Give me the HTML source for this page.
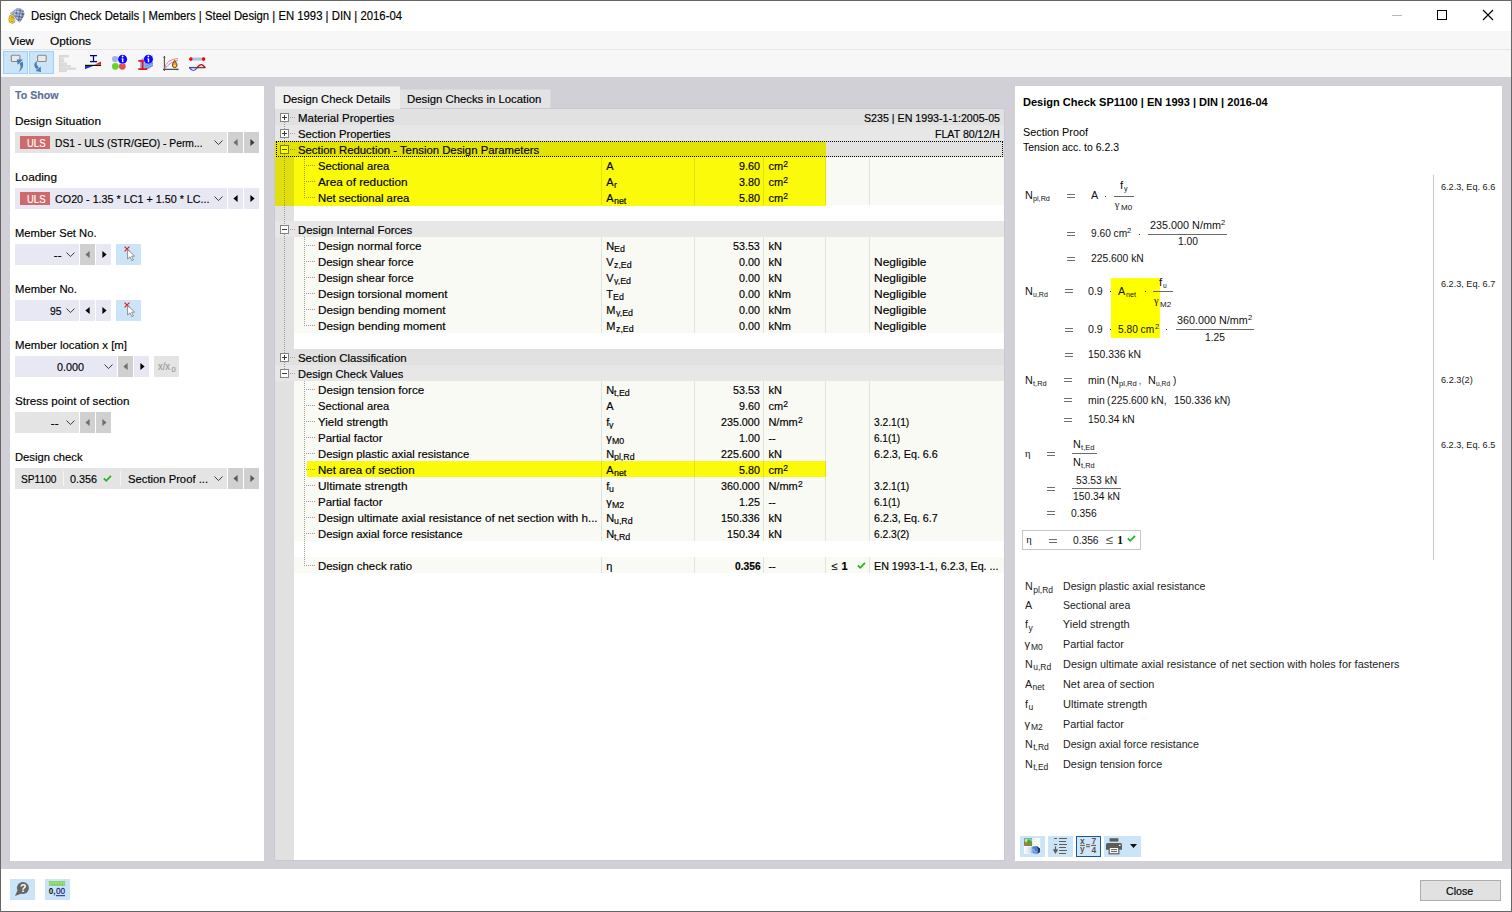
<!DOCTYPE html>
<html><head><meta charset="utf-8"><title>Design Check Details</title>
<style>
html,body{margin:0;padding:0;}
body{width:1512px;height:912px;position:relative;overflow:hidden;background:#fff;font-family:"Liberation Sans",sans-serif;font-size:11.5px;color:#000;}
div,span.t,svg{position:absolute;}
span.t{white-space:pre;transform-origin:0 0;-webkit-text-stroke:0.16px currentColor;}span.m{-webkit-text-stroke:0;}
svg{overflow:visible;}
</style></head><body>
<div style="left:0px;top:0px;width:1512px;height:31px;background:#fff;"></div>
<svg style="left:8px;top:7px;" width="17" height="17" viewBox="0 0 17 17">
<defs><linearGradient id="ig" x1="0" y1="0" x2="1" y2="1"><stop offset="0" stop-color="#aebfe4"/><stop offset="0.45" stop-color="#7083ae"/><stop offset="1" stop-color="#34405f"/></linearGradient>
<pattern id="ck" width="4.4" height="4.4" patternUnits="userSpaceOnUse" patternTransform="rotate(-36)"><rect width="2.2" height="2.2" fill="#dbe6fb" opacity="0.75"/><rect x="2.2" y="2.2" width="2.2" height="2.2" fill="#dbe6fb" opacity="0.55"/><rect x="2.2" width="2.2" height="2.2" fill="#2c3858" opacity="0.35"/></pattern></defs>
<path d="M1.8 6.6 L9 1.1 Q13.2 0.2 15.5 3.6 Q17.2 6.6 15.6 9.6 L11.7 15.6 L8 12 L6 8.4 Z" fill="url(#ig)"/>
<path d="M1.8 6.6 L9 1.1 Q13.2 0.2 15.5 3.6 Q17.2 6.6 15.6 9.6 L11.7 15.6 L8 12 L6 8.4 Z" fill="url(#ck)"/>
<text x="0.7" y="15.7" font-family="Liberation Sans" font-weight="700" font-size="11.5" fill="#f3cc1c" stroke="#806a14" stroke-width="0.9" paint-order="stroke">6</text>
</svg>
<span class="t " style="left:30.50px;top:9px;font-size:12px;line-height:14px;transform:scaleX(0.9438);">Design Check Details | Members | Steel Design | EN 1993 | DIN | 2016-04</span>
<div style="left:1392px;top:15px;width:10px;height:1px;background:#b8b8b8;"></div>
<div style="left:1437px;top:10px;width:10px;height:10px;border:1px solid #000;box-sizing:border-box;"></div>
<svg style="left:1483px;top:10px;" width="10" height="10" viewBox="0 0 10 10"><path d="M0 0 L10 10 M10 0 L0 10" stroke="#000" stroke-width="1.1" fill="none"/></svg>
<div style="left:1px;top:31px;width:1510px;height:18px;background:#f7f7f7;"></div>
<div style="left:1px;top:49px;width:1510px;height:1px;background:#e6e6e6;"></div>
<div style="left:1px;top:50px;width:1510px;height:27px;background:#f7f7f7;"></div>
<span class="t " style="left:9.00px;top:35px;font-size:11.5px;line-height:12px;transform:scaleX(1.0114);">View</span>
<span class="t " style="left:50.30px;top:35px;font-size:11.5px;line-height:12px;transform:scaleX(1.0345);">Options</span>
<div style="left:3px;top:51px;width:25px;height:23px;background:#cce4f7;border:1px solid #99d1ff;box-sizing:border-box;"></div>
<div style="left:29px;top:51px;width:25px;height:23px;background:#cce4f7;border:1px solid #99d1ff;box-sizing:border-box;"></div>
<svg style="left:7px;top:54px;" width="18" height="19" viewBox="0 0 18 19">
<rect x="4.3" y="1.3" width="8.6" height="6.2" rx="1" fill="#e9e9e9" stroke="#8a8a8a" stroke-width="1.1"/>
<path d="M11.4 17.9 Q18.4 13.6 15.4 7.6 L12.4 9.4 Q15 13.4 11.4 17.9 Z" fill="#4a7fb6"/>
<path d="M9.7 5.4 L16 5.6 L10.7 10.8 Z" fill="#4a7fb6"/>
</svg>
<svg style="left:33px;top:54px;" width="18" height="19" viewBox="0 0 18 19">
<rect x="4.6" y="1.3" width="8.6" height="6.2" rx="1" fill="#e9e9e9" stroke="#8a8a8a" stroke-width="1.1"/>
<path d="M4.6 6.6 Q-1.6 10.6 3.6 15.6 L5.8 13.4 Q2.2 10.6 4.6 6.6 Z" fill="#4a7fb6"/>
<path d="M2.5 17 L8 17.9 L7.7 12.4 Z" fill="#4a7fb6"/>
</svg>
<svg style="left:59px;top:55px;" width="18" height="18" viewBox="0 0 18 18"><g fill="#d9d9d9">
<rect x="0" y="0" width="10" height="2.4"/><rect x="0" y="2.6" width="4.6" height="2.3"/><rect x="0" y="5.1" width="5.2" height="2.3"/>
<rect x="0" y="7.6" width="8" height="2.3"/><rect x="0" y="10.1" width="12" height="2.2"/><rect x="0" y="12.5" width="16.8" height="2.4"/><rect x="0" y="15.1" width="8" height="2"/><rect x="0" y="0" width="1" height="17.1" fill="#d2d2d2"/></g></svg>
<svg style="left:85px;top:54px;" width="17" height="17" viewBox="0 0 17 17">
<path d="M5 1.6 H12 M5 7.6 H12 M8.5 1.6 V7.6" stroke="#00008b" stroke-width="1.3" fill="none"/>
<path d="M0 11.4 H16" stroke="#111" stroke-width="1.2"/>
<path d="M0 12 L8 12 L0 15.3 Z" fill="#1c3fae"/>
<path d="M16 7.5 L16 10.8 L9.6 10.8 Z" fill="#d8280a"/>
</svg>
<svg style="left:111px;top:54px;" width="17" height="17" viewBox="0 0 17 17">
<circle cx="4.1" cy="5.1" r="3.1" fill="#9fb3ea"/>
<circle cx="4.3" cy="12.3" r="3.4" fill="#66d424"/>
<circle cx="11.3" cy="12.3" r="3.4" fill="#e05252"/>
<circle cx="11.6" cy="5.3" r="4.9" fill="#fff"/>
<circle cx="11.6" cy="5.3" r="4.5" fill="#0a0aff"/>
<rect x="11" y="4.5" width="1.4" height="3.7" fill="#fff"/><rect x="10.4" y="4.5" width="1" height="0.8" fill="#fff"/><circle cx="11.6" cy="2.5" r="0.9" fill="#fff"/>
</svg>
<svg style="left:137px;top:54px;" width="17" height="17" viewBox="0 0 17 17">
<path d="M3 6 L10 1.5 L16 1.5 L16 12 L10 16 L3 16 Z" fill="#8fb2ea"/>
<path d="M8 10 L16 6.5 M8 12.5 L16 9 M8 15 L16 11.4" stroke="#5f86cf" stroke-width="0.9"/>
<path d="M1.3 6.8 H10 M1.3 15.2 H10 M5.6 6.8 V15.2" stroke="#e8101c" stroke-width="1.7" fill="none"/>
<circle cx="11.4" cy="5.3" r="4.9" fill="#fff" opacity="0.6"/>
<circle cx="11.4" cy="5.3" r="4.5" fill="#0a0aff"/>
<rect x="10.8" y="4.5" width="1.4" height="3.7" fill="#fff"/><rect x="10.2" y="4.5" width="1" height="0.8" fill="#fff"/><circle cx="11.4" cy="2.5" r="0.9" fill="#fff"/>
</svg>
<svg style="left:163px;top:54px;" width="17" height="18" viewBox="0 0 17 18">
<path d="M1.4 2 V17 M0 15.4 H15.5" stroke="#505050" stroke-width="1.1" fill="none"/>
<path d="M1.4 2 l-1.2 2 h2.4 z M15.6 15.4 l-2 -1.2 v2.4 z" fill="#505050"/>
<path d="M1.6 15 Q3 5 15 4.6" stroke="#ff6a6a" stroke-width="0.9" fill="none"/>
<path d="M1.6 15 Q8 7 15 6.6" stroke="#8a8aff" stroke-width="0.9" fill="none"/>
<path d="M11.7 6.4 Q14.6 10 14 12 Q13.3 13.7 11.7 13.7 Q10 13.7 9.4 12 Q8.8 10 11.7 6.4 Z" fill="#ff8a14" stroke="#5a2a10" stroke-width="0.8"/>
<circle cx="11.7" cy="11.6" r="1.2" fill="#ffe27a"/>
</svg>
<svg style="left:189px;top:54px;" width="17" height="18" viewBox="0 0 17 18">
<rect x="1.4" y="3.6" width="13.4" height="3" fill="#a9c4e2"/>
<circle cx="1.8" cy="5.1" r="1.8" fill="#f00"/><circle cx="14.6" cy="5.1" r="1.8" fill="#f00"/>
<path d="M0 13.6 H16.4" stroke="#555" stroke-width="1.4"/>
<path d="M0.5 13.6 Q4.3 19.4 8.2 13.6" stroke="#3c3cff" stroke-width="1.1" fill="none"/>
<path d="M8.2 13.6 Q12.2 7.6 16.2 13.6" stroke="#c00000" stroke-width="1.3" fill="none"/>
</svg>
<div style="left:1px;top:77px;width:1510px;height:792px;background:#d1d0d6;"></div>
<div style="left:10px;top:86px;width:254px;height:775px;background:#fff;"></div>
<span class="t " style="left:15.00px;top:89px;font-size:11.5px;line-height:12px;font-weight:700;color:#5b6f98;transform:scaleX(0.9244);">To Show</span>
<span class="t " style="left:15.20px;top:115px;font-size:11.5px;line-height:12px;transform:scaleX(1.0269);">Design Situation</span>
<span class="t " style="left:15.20px;top:171px;font-size:11.5px;line-height:12px;transform:scaleX(1.0261);">Loading</span>
<span class="t " style="left:15.20px;top:227px;font-size:11.5px;line-height:12px;transform:scaleX(0.9734);">Member Set No.</span>
<span class="t " style="left:15.20px;top:283px;font-size:11.5px;line-height:12px;transform:scaleX(0.9800);">Member No.</span>
<span class="t " style="left:15.20px;top:339px;font-size:11.5px;line-height:12px;transform:scaleX(0.9901);">Member location x [m]</span>
<span class="t " style="left:15.20px;top:395px;font-size:11.5px;line-height:12px;transform:scaleX(1.0120);">Stress point of section</span>
<span class="t " style="left:15.20px;top:451px;font-size:11.5px;line-height:12px;transform:scaleX(0.9778);">Design check</span>
<div style="left:15px;top:132px;width:212px;height:21px;background:#e4e4e4;"></div>
<div style="left:20px;top:136px;width:30px;height:13px;background:#cf6a6c;"></div>
<span class="t " style="left:26.50px;top:137px;font-size:11.5px;line-height:12px;color:#fff;transform:scaleX(0.8270);">ULS</span>
<span class="t " style="left:55.00px;top:137px;font-size:11.5px;line-height:12px;transform:scaleX(0.8947);">DS1 - ULS (STR/GEO) - Perm...</span>
<svg style="left:213.5px;top:140px;" width="9" height="6" viewBox="0 0 9 6"><path d="M0.5 0.5 L4.5 4.6 L8.5 0.5" stroke="#3c3c3c" stroke-width="1" fill="none"/></svg>
<div style="left:228px;top:132px;width:15px;height:21px;background:#d0d0d0;"></div>
<div style="left:244px;top:132px;width:15px;height:21px;background:#d0d0d0;"></div>
<svg style="left:232.5px;top:139px;" width="5" height="7" viewBox="0 0 5 7"><path d="M4.6 0 L0.4 3.5 L4.6 7 Z" fill="#6e6e6e"/></svg>
<svg style="left:249.5px;top:139px;" width="5" height="7" viewBox="0 0 5 7"><path d="M0.4 0 L4.6 3.5 L0.4 7 Z" fill="#3c3c3c"/></svg>
<div style="left:15px;top:188px;width:212px;height:21px;background:#e8e8f4;"></div>
<div style="left:20px;top:192px;width:30px;height:13px;background:#cf6a6c;"></div>
<span class="t " style="left:26.50px;top:193px;font-size:11.5px;line-height:12px;color:#fff;transform:scaleX(0.8270);">ULS</span>
<span class="t " style="left:55.00px;top:193px;font-size:11.5px;line-height:12px;transform:scaleX(0.9350);">CO20 - 1.35 * LC1 + 1.50 * LC...</span>
<svg style="left:213.5px;top:196px;" width="9" height="6" viewBox="0 0 9 6"><path d="M0.5 0.5 L4.5 4.6 L8.5 0.5" stroke="#3c3c3c" stroke-width="1" fill="none"/></svg>
<div style="left:228px;top:188px;width:15px;height:21px;background:#e8e8f4;"></div>
<div style="left:244px;top:188px;width:15px;height:21px;background:#e8e8f4;"></div>
<svg style="left:232.5px;top:195px;" width="5" height="7" viewBox="0 0 5 7"><path d="M4.6 0 L0.4 3.5 L4.6 7 Z" fill="#000"/></svg>
<svg style="left:249.5px;top:195px;" width="5" height="7" viewBox="0 0 5 7"><path d="M0.4 0 L4.6 3.5 L0.4 7 Z" fill="#000"/></svg>
<div style="left:15px;top:244px;width:64px;height:21px;background:#e8e8f4;"></div>
<span class="t " style="left:53.84px;top:249px;font-size:11.5px;line-height:12px;">--</span>
<svg style="left:65.5px;top:252px;" width="9" height="6" viewBox="0 0 9 6"><path d="M0.5 0.5 L4.5 4.6 L8.5 0.5" stroke="#3c3c3c" stroke-width="1" fill="none"/></svg>
<div style="left:80px;top:244px;width:15px;height:21px;background:#d0d0d0;"></div>
<div style="left:96px;top:244px;width:15px;height:21px;background:#e8e8f4;"></div>
<svg style="left:84.5px;top:251px;" width="5" height="7" viewBox="0 0 5 7"><path d="M4.6 0 L0.4 3.5 L4.6 7 Z" fill="#6e6e6e"/></svg>
<svg style="left:101.5px;top:251px;" width="5" height="7" viewBox="0 0 5 7"><path d="M0.4 0 L4.6 3.5 L0.4 7 Z" fill="#000"/></svg>
<div style="left:116px;top:244px;width:25px;height:21px;background:#cce4f7;"></div>
<svg style="left:123.5px;top:246px;" width="12" height="16" viewBox="0 0 12 16"><path d="M0.6 0.6 L5.4 5.4 M5.4 0.6 L0.6 5.4" stroke="#e8101c" stroke-width="1.1"/>
<path d="M3.6 3.6 L3.6 13 L6 10.8 L7.8 14.6 L9.4 13.8 L7.6 10.2 L10.6 10 Z" fill="#fff" stroke="#777" stroke-width="0.8"/></svg>
<div style="left:15px;top:300px;width:64px;height:21px;background:#e8e8f4;"></div>
<span class="t " style="left:49.80px;top:305px;font-size:11.5px;line-height:12px;transform:scaleX(0.8990);">95</span>
<svg style="left:65.5px;top:308px;" width="9" height="6" viewBox="0 0 9 6"><path d="M0.5 0.5 L4.5 4.6 L8.5 0.5" stroke="#3c3c3c" stroke-width="1" fill="none"/></svg>
<div style="left:80px;top:300px;width:15px;height:21px;background:#e8e8f4;"></div>
<div style="left:96px;top:300px;width:15px;height:21px;background:#e8e8f4;"></div>
<svg style="left:84.5px;top:307px;" width="5" height="7" viewBox="0 0 5 7"><path d="M4.6 0 L0.4 3.5 L4.6 7 Z" fill="#000"/></svg>
<svg style="left:101.5px;top:307px;" width="5" height="7" viewBox="0 0 5 7"><path d="M0.4 0 L4.6 3.5 L0.4 7 Z" fill="#000"/></svg>
<div style="left:116px;top:300px;width:25px;height:21px;background:#cce4f7;"></div>
<svg style="left:123.5px;top:302px;" width="12" height="16" viewBox="0 0 12 16"><path d="M0.6 0.6 L5.4 5.4 M5.4 0.6 L0.6 5.4" stroke="#e8101c" stroke-width="1.1"/>
<path d="M3.6 3.6 L3.6 13 L6 10.8 L7.8 14.6 L9.4 13.8 L7.6 10.2 L10.6 10 Z" fill="#fff" stroke="#777" stroke-width="0.8"/></svg>
<div style="left:15px;top:356px;width:102px;height:21px;background:#e8e8f4;"></div>
<span class="t " style="left:57.00px;top:361px;font-size:11.5px;line-height:12px;transform:scaleX(0.9382);">0.000</span>
<svg style="left:103.8px;top:364px;" width="9" height="6" viewBox="0 0 9 6"><path d="M0.5 0.5 L4.5 4.6 L8.5 0.5" stroke="#3c3c3c" stroke-width="1" fill="none"/></svg>
<div style="left:118px;top:356px;width:15px;height:21px;background:#d0d0d0;"></div>
<div style="left:134px;top:356px;width:15px;height:21px;background:#e8e8f4;"></div>
<svg style="left:122.5px;top:363px;" width="5" height="7" viewBox="0 0 5 7"><path d="M4.6 0 L0.4 3.5 L4.6 7 Z" fill="#6e6e6e"/></svg>
<svg style="left:139.5px;top:363px;" width="5" height="7" viewBox="0 0 5 7"><path d="M0.4 0 L4.6 3.5 L0.4 7 Z" fill="#000"/></svg>
<div style="left:154px;top:356px;width:25px;height:21px;background:#e4e4e4;"></div>
<span class="t " style="left:158.00px;top:361px;font-size:10px;line-height:11px;color:#9a9a9a;transform:scaleX(0.9391);">x/x</span>
<span class="t " style="left:171.50px;top:365px;font-size:7.5px;line-height:9px;color:#9a9a9a;">0</span>
<div style="left:15px;top:412px;width:64px;height:21px;background:#e4e4e4;"></div>
<span class="t " style="left:50.84px;top:417px;font-size:11.5px;line-height:12px;">--</span>
<svg style="left:65.5px;top:420px;" width="9" height="6" viewBox="0 0 9 6"><path d="M0.5 0.5 L4.5 4.6 L8.5 0.5" stroke="#3c3c3c" stroke-width="1" fill="none"/></svg>
<div style="left:80px;top:412px;width:15px;height:21px;background:#d0d0d0;"></div>
<div style="left:96px;top:412px;width:15px;height:21px;background:#d0d0d0;"></div>
<svg style="left:84.5px;top:419px;" width="5" height="7" viewBox="0 0 5 7"><path d="M4.6 0 L0.4 3.5 L4.6 7 Z" fill="#6e6e6e"/></svg>
<svg style="left:101.5px;top:419px;" width="5" height="7" viewBox="0 0 5 7"><path d="M0.4 0 L4.6 3.5 L0.4 7 Z" fill="#6e6e6e"/></svg>
<div style="left:15px;top:468px;width:212px;height:21px;background:#e4e4e4;"></div>
<span class="t " style="left:20.50px;top:473px;font-size:11.5px;line-height:12px;transform:scaleX(0.8859);">SP1100</span>
<div style="left:63px;top:471px;width:1px;height:15px;background:#f4f4f4;"></div>
<span class="t " style="left:70.20px;top:473px;font-size:11.5px;line-height:12px;transform:scaleX(0.9382);">0.356</span>
<svg style="left:102.5px;top:475px;" width="9" height="7" viewBox="0 0 9 7"><path d="M0.8 3.4 L3.2 5.8 L8 0.8" stroke="#22b422" stroke-width="1.7" fill="none"/></svg>
<div style="left:120px;top:471px;width:1px;height:15px;background:#f4f4f4;"></div>
<span class="t " style="left:127.50px;top:473px;font-size:11.5px;line-height:12px;transform:scaleX(0.9778);">Section Proof ...</span>
<svg style="left:213.8px;top:476px;" width="9" height="6" viewBox="0 0 9 6"><path d="M0.5 0.5 L4.5 4.6 L8.5 0.5" stroke="#3c3c3c" stroke-width="1" fill="none"/></svg>
<div style="left:228px;top:468px;width:15px;height:21px;background:#d0d0d0;"></div>
<div style="left:244px;top:468px;width:15px;height:21px;background:#d0d0d0;"></div>
<svg style="left:232.5px;top:475px;" width="5" height="7" viewBox="0 0 5 7"><path d="M4.6 0 L0.4 3.5 L4.6 7 Z" fill="#5a5a5a"/></svg>
<svg style="left:249.5px;top:475px;" width="5" height="7" viewBox="0 0 5 7"><path d="M0.4 0 L4.6 3.5 L0.4 7 Z" fill="#5a5a5a"/></svg>
<div style="left:275px;top:86px;width:124.5px;height:1px;background:#e2e2e7;"></div>
<div style="left:275px;top:87px;width:124.5px;height:23px;background:#f0f0f0;"></div>
<div style="left:399.5px;top:89px;width:151px;height:20px;background:#e3e3e6;border:1px solid #d8d8df;box-sizing:border-box;border-left:none;"></div>
<span class="t " style="left:283.00px;top:93px;font-size:11px;line-height:12px;transform:scaleX(1.0213);">Design Check Details</span>
<span class="t " style="left:407.10px;top:93px;font-size:11px;line-height:12px;transform:scaleX(1.0312);">Design Checks in Location</span>
<div style="left:274px;top:108px;width:731px;height:753px;background:#c9c9d3;"></div>
<div style="left:275px;top:109px;width:729px;height:751px;background:#fff;"></div>
<div style="left:275px;top:109px;width:19px;height:751px;background:#e1e1e1;"></div>
<div style="left:275px;top:108px;width:124.5px;height:1px;background:#f0f0f0;"></div>
<div style="left:275px;top:109px;width:729px;height:16px;background:#e1e1e1;"></div>
<svg style="left:280px;top:113px;" width="9" height="9" viewBox="0 0 9 9"><rect x="0.5" y="0.5" width="8" height="8" fill="#fff" stroke="#848484"/><path d="M2 4.5 H7" stroke="#3a3a3a" stroke-width="1"/><path d="M4.5 2 V7" stroke="#3a3a3a" stroke-width="1"/></svg>
<div style="left:290px;top:117px;width:5px;height:1px;background:repeating-linear-gradient(to right,#a8a8a8 0 1px,transparent 1px 2px);"></div>
<span class="t " style="left:298.40px;top:112px;font-size:11px;line-height:12px;transform:scaleX(1.0426);">Material Properties</span>
<span class="t " style="left:863.60px;top:112px;font-size:11px;line-height:12px;transform:scaleX(0.9683);">S235 | EN 1993-1-1:2005-05</span>
<div style="left:275px;top:125px;width:729px;height:16px;background:#e7e7e7;"></div>
<svg style="left:280px;top:129px;" width="9" height="9" viewBox="0 0 9 9"><rect x="0.5" y="0.5" width="8" height="8" fill="#fff" stroke="#848484"/><path d="M2 4.5 H7" stroke="#3a3a3a" stroke-width="1"/><path d="M4.5 2 V7" stroke="#3a3a3a" stroke-width="1"/></svg>
<div style="left:290px;top:133px;width:5px;height:1px;background:repeating-linear-gradient(to right,#a8a8a8 0 1px,transparent 1px 2px);"></div>
<span class="t " style="left:298.40px;top:128px;font-size:11px;line-height:12px;transform:scaleX(1.0291);">Section Properties</span>
<span class="t " style="left:934.60px;top:128px;font-size:11px;line-height:12px;transform:scaleX(0.9635);">FLAT 80/12/H</span>
<div style="left:275px;top:141px;width:729px;height:16px;background:#e1e1e1;"></div>
<div style="left:275px;top:141px;width:551px;height:16px;background:#e2e206;"></div>
<svg style="left:280px;top:145px;" width="9" height="9" viewBox="0 0 9 9"><rect x="0.5" y="0.5" width="8" height="8" fill="#ffff00" stroke="#77770a"/><path d="M2 4.5 H7" stroke="#55550a" stroke-width="1"/></svg>
<div style="left:290px;top:149px;width:5px;height:1px;background:repeating-linear-gradient(to right,#a0a00a 0 1px,transparent 1px 2px);"></div>
<span class="t " style="left:298.40px;top:144px;font-size:11px;line-height:12px;transform:scaleX(1.0311);">Section Reduction - Tension Design Parameters</span>
<div style="left:294px;top:157px;width:710px;height:16px;background:#fafaf5;"></div>
<div style="left:275px;top:157px;width:19px;height:16px;background:#e0e010;"></div>
<div style="left:294px;top:157px;width:532px;height:16px;background:#fafa0a;"></div>
<div style="left:601px;top:157px;width:1px;height:16px;background:#e2e208;"></div>
<div style="left:694px;top:157px;width:1px;height:16px;background:#e2e208;"></div>
<div style="left:763px;top:157px;width:1px;height:16px;background:#e2e208;"></div>
<div style="left:825px;top:157px;width:1px;height:16px;background:#e2e208;"></div>
<div style="left:869px;top:157px;width:1px;height:16px;background:#e3e3de;"></div>
<div style="left:306px;top:165px;width:10px;height:1px;background:repeating-linear-gradient(to right,#a0a00a 0 1px,transparent 1px 2px);"></div>
<span class="t " style="left:318.40px;top:160px;font-size:11px;line-height:12px;transform:scaleX(1.0132);">Sectional area</span>
<span class="t " style="left:606.20px;top:160px;font-size:11px;line-height:12px;">A</span>
<span class="t " style="left:739.33px;top:160px;font-size:11px;line-height:12px;transform:scaleX(0.9750);">9.60</span>
<span class="t " style="left:768.40px;top:160px;font-size:11px;line-height:12px;">cm</span>
<span class="t " style="left:783.36px;top:159px;font-size:8.5px;line-height:10px;">2</span>
<div style="left:294px;top:173px;width:710px;height:16px;background:#fafaf5;"></div>
<div style="left:275px;top:173px;width:19px;height:16px;background:#e0e010;"></div>
<div style="left:294px;top:173px;width:532px;height:16px;background:#fafa0a;"></div>
<div style="left:601px;top:173px;width:1px;height:16px;background:#e2e208;"></div>
<div style="left:694px;top:173px;width:1px;height:16px;background:#e2e208;"></div>
<div style="left:763px;top:173px;width:1px;height:16px;background:#e2e208;"></div>
<div style="left:825px;top:173px;width:1px;height:16px;background:#e2e208;"></div>
<div style="left:869px;top:173px;width:1px;height:16px;background:#e3e3de;"></div>
<div style="left:306px;top:181px;width:10px;height:1px;background:repeating-linear-gradient(to right,#a0a00a 0 1px,transparent 1px 2px);"></div>
<span class="t " style="left:318.40px;top:176px;font-size:11px;line-height:12px;transform:scaleX(1.0684);">Area of reduction</span>
<span class="t " style="left:606.20px;top:176px;font-size:11px;line-height:12px;">A</span>
<span class="t " style="left:613.74px;top:180px;font-size:9px;line-height:10px;transform:scaleX(0.9800);">r</span>
<span class="t " style="left:739.33px;top:176px;font-size:11px;line-height:12px;transform:scaleX(0.9750);">3.80</span>
<span class="t " style="left:768.40px;top:176px;font-size:11px;line-height:12px;">cm</span>
<span class="t " style="left:783.36px;top:175px;font-size:8.5px;line-height:10px;">2</span>
<div style="left:294px;top:189px;width:710px;height:16px;background:#fafaf5;"></div>
<div style="left:275px;top:189px;width:19px;height:17px;background:#e0e010;"></div>
<div style="left:294px;top:189px;width:532px;height:17px;background:#fafa0a;"></div>
<div style="left:601px;top:189px;width:1px;height:16px;background:#e2e208;"></div>
<div style="left:694px;top:189px;width:1px;height:16px;background:#e2e208;"></div>
<div style="left:763px;top:189px;width:1px;height:16px;background:#e2e208;"></div>
<div style="left:825px;top:189px;width:1px;height:16px;background:#e2e208;"></div>
<div style="left:869px;top:189px;width:1px;height:16px;background:#e3e3de;"></div>
<div style="left:306px;top:197px;width:10px;height:1px;background:repeating-linear-gradient(to right,#a0a00a 0 1px,transparent 1px 2px);"></div>
<span class="t " style="left:318.40px;top:192px;font-size:11px;line-height:12px;transform:scaleX(1.0292);">Net sectional area</span>
<span class="t " style="left:606.20px;top:192px;font-size:11px;line-height:12px;">A</span>
<span class="t " style="left:613.74px;top:196px;font-size:9px;line-height:10px;transform:scaleX(0.9800);">net</span>
<span class="t " style="left:739.33px;top:192px;font-size:11px;line-height:12px;transform:scaleX(0.9750);">5.80</span>
<span class="t " style="left:768.40px;top:192px;font-size:11px;line-height:12px;">cm</span>
<span class="t " style="left:783.36px;top:191px;font-size:8.5px;line-height:10px;">2</span>
<div style="left:275px;top:221px;width:729px;height:16px;background:#e7e7e7;"></div>
<svg style="left:280px;top:225px;" width="9" height="9" viewBox="0 0 9 9"><rect x="0.5" y="0.5" width="8" height="8" fill="#fff" stroke="#848484"/><path d="M2 4.5 H7" stroke="#3a3a3a" stroke-width="1"/></svg>
<div style="left:290px;top:229px;width:5px;height:1px;background:repeating-linear-gradient(to right,#a8a8a8 0 1px,transparent 1px 2px);"></div>
<span class="t " style="left:298.40px;top:224px;font-size:11px;line-height:12px;transform:scaleX(1.0324);">Design Internal Forces</span>
<div style="left:294px;top:237px;width:710px;height:16px;background:#fafaf5;"></div>
<div style="left:601px;top:237px;width:1px;height:16px;background:#e3e3de;"></div>
<div style="left:694px;top:237px;width:1px;height:16px;background:#e3e3de;"></div>
<div style="left:763px;top:237px;width:1px;height:16px;background:#e3e3de;"></div>
<div style="left:825px;top:237px;width:1px;height:16px;background:#e3e3de;"></div>
<div style="left:869px;top:237px;width:1px;height:16px;background:#e3e3de;"></div>
<div style="left:306px;top:245px;width:10px;height:1px;background:repeating-linear-gradient(to right,#9c9c9c 0 1px,transparent 1px 2px);"></div>
<span class="t " style="left:318.40px;top:240px;font-size:11px;line-height:12px;transform:scaleX(1.0515);">Design normal force</span>
<span class="t " style="left:606.20px;top:240px;font-size:11px;line-height:12px;">N</span>
<span class="t " style="left:614.34px;top:244px;font-size:9px;line-height:10px;transform:scaleX(0.9800);">Ed</span>
<span class="t " style="left:733.36px;top:240px;font-size:11px;line-height:12px;transform:scaleX(0.9750);">53.53</span>
<span class="t " style="left:768.40px;top:240px;font-size:11px;line-height:12px;">kN</span>
<div style="left:294px;top:253px;width:710px;height:16px;background:#fafaf5;"></div>
<div style="left:601px;top:253px;width:1px;height:16px;background:#e3e3de;"></div>
<div style="left:694px;top:253px;width:1px;height:16px;background:#e3e3de;"></div>
<div style="left:763px;top:253px;width:1px;height:16px;background:#e3e3de;"></div>
<div style="left:825px;top:253px;width:1px;height:16px;background:#e3e3de;"></div>
<div style="left:869px;top:253px;width:1px;height:16px;background:#e3e3de;"></div>
<div style="left:306px;top:261px;width:10px;height:1px;background:repeating-linear-gradient(to right,#9c9c9c 0 1px,transparent 1px 2px);"></div>
<span class="t " style="left:318.40px;top:256px;font-size:11px;line-height:12px;transform:scaleX(1.0344);">Design shear force</span>
<span class="t " style="left:606.20px;top:256px;font-size:11px;line-height:12px;">V</span>
<span class="t " style="left:613.74px;top:260px;font-size:9px;line-height:10px;transform:scaleX(0.9800);">z,Ed</span>
<span class="t " style="left:739.33px;top:256px;font-size:11px;line-height:12px;transform:scaleX(0.9750);">0.00</span>
<span class="t " style="left:768.40px;top:256px;font-size:11px;line-height:12px;">kN</span>
<span class="t " style="left:874.20px;top:256px;font-size:11px;line-height:12px;transform:scaleX(1.0868);">Negligible</span>
<div style="left:294px;top:269px;width:710px;height:16px;background:#fafaf5;"></div>
<div style="left:601px;top:269px;width:1px;height:16px;background:#e3e3de;"></div>
<div style="left:694px;top:269px;width:1px;height:16px;background:#e3e3de;"></div>
<div style="left:763px;top:269px;width:1px;height:16px;background:#e3e3de;"></div>
<div style="left:825px;top:269px;width:1px;height:16px;background:#e3e3de;"></div>
<div style="left:869px;top:269px;width:1px;height:16px;background:#e3e3de;"></div>
<div style="left:306px;top:277px;width:10px;height:1px;background:repeating-linear-gradient(to right,#9c9c9c 0 1px,transparent 1px 2px);"></div>
<span class="t " style="left:318.40px;top:272px;font-size:11px;line-height:12px;transform:scaleX(1.0344);">Design shear force</span>
<span class="t " style="left:606.20px;top:272px;font-size:11px;line-height:12px;">V</span>
<span class="t " style="left:613.74px;top:276px;font-size:9px;line-height:10px;transform:scaleX(0.9800);">y,Ed</span>
<span class="t " style="left:739.33px;top:272px;font-size:11px;line-height:12px;transform:scaleX(0.9750);">0.00</span>
<span class="t " style="left:768.40px;top:272px;font-size:11px;line-height:12px;">kN</span>
<span class="t " style="left:874.20px;top:272px;font-size:11px;line-height:12px;transform:scaleX(1.0868);">Negligible</span>
<div style="left:294px;top:285px;width:710px;height:16px;background:#fafaf5;"></div>
<div style="left:601px;top:285px;width:1px;height:16px;background:#e3e3de;"></div>
<div style="left:694px;top:285px;width:1px;height:16px;background:#e3e3de;"></div>
<div style="left:763px;top:285px;width:1px;height:16px;background:#e3e3de;"></div>
<div style="left:825px;top:285px;width:1px;height:16px;background:#e3e3de;"></div>
<div style="left:869px;top:285px;width:1px;height:16px;background:#e3e3de;"></div>
<div style="left:306px;top:293px;width:10px;height:1px;background:repeating-linear-gradient(to right,#9c9c9c 0 1px,transparent 1px 2px);"></div>
<span class="t " style="left:318.40px;top:288px;font-size:11px;line-height:12px;transform:scaleX(1.0644);">Design torsional moment</span>
<span class="t " style="left:606.20px;top:288px;font-size:11px;line-height:12px;">T</span>
<span class="t " style="left:613.12px;top:292px;font-size:9px;line-height:10px;transform:scaleX(0.9800);">Ed</span>
<span class="t " style="left:739.33px;top:288px;font-size:11px;line-height:12px;transform:scaleX(0.9750);">0.00</span>
<span class="t " style="left:768.40px;top:288px;font-size:11px;line-height:12px;">kNm</span>
<span class="t " style="left:874.20px;top:288px;font-size:11px;line-height:12px;transform:scaleX(1.0868);">Negligible</span>
<div style="left:294px;top:301px;width:710px;height:16px;background:#fafaf5;"></div>
<div style="left:601px;top:301px;width:1px;height:16px;background:#e3e3de;"></div>
<div style="left:694px;top:301px;width:1px;height:16px;background:#e3e3de;"></div>
<div style="left:763px;top:301px;width:1px;height:16px;background:#e3e3de;"></div>
<div style="left:825px;top:301px;width:1px;height:16px;background:#e3e3de;"></div>
<div style="left:869px;top:301px;width:1px;height:16px;background:#e3e3de;"></div>
<div style="left:306px;top:309px;width:10px;height:1px;background:repeating-linear-gradient(to right,#9c9c9c 0 1px,transparent 1px 2px);"></div>
<span class="t " style="left:318.40px;top:304px;font-size:11px;line-height:12px;transform:scaleX(1.0693);">Design bending moment</span>
<span class="t " style="left:606.20px;top:304px;font-size:11px;line-height:12px;">M</span>
<span class="t " style="left:615.56px;top:308px;font-size:9px;line-height:10px;transform:scaleX(0.9800);">y,Ed</span>
<span class="t " style="left:739.33px;top:304px;font-size:11px;line-height:12px;transform:scaleX(0.9750);">0.00</span>
<span class="t " style="left:768.40px;top:304px;font-size:11px;line-height:12px;">kNm</span>
<span class="t " style="left:874.20px;top:304px;font-size:11px;line-height:12px;transform:scaleX(1.0868);">Negligible</span>
<div style="left:294px;top:317px;width:710px;height:16px;background:#fafaf5;"></div>
<div style="left:601px;top:317px;width:1px;height:16px;background:#e3e3de;"></div>
<div style="left:694px;top:317px;width:1px;height:16px;background:#e3e3de;"></div>
<div style="left:763px;top:317px;width:1px;height:16px;background:#e3e3de;"></div>
<div style="left:825px;top:317px;width:1px;height:16px;background:#e3e3de;"></div>
<div style="left:869px;top:317px;width:1px;height:16px;background:#e3e3de;"></div>
<div style="left:306px;top:325px;width:10px;height:1px;background:repeating-linear-gradient(to right,#9c9c9c 0 1px,transparent 1px 2px);"></div>
<span class="t " style="left:318.40px;top:320px;font-size:11px;line-height:12px;transform:scaleX(1.0693);">Design bending moment</span>
<span class="t " style="left:606.20px;top:320px;font-size:11px;line-height:12px;">M</span>
<span class="t " style="left:615.56px;top:324px;font-size:9px;line-height:10px;transform:scaleX(0.9800);">z,Ed</span>
<span class="t " style="left:739.33px;top:320px;font-size:11px;line-height:12px;transform:scaleX(0.9750);">0.00</span>
<span class="t " style="left:768.40px;top:320px;font-size:11px;line-height:12px;">kNm</span>
<span class="t " style="left:874.20px;top:320px;font-size:11px;line-height:12px;transform:scaleX(1.0868);">Negligible</span>
<div style="left:275px;top:349px;width:729px;height:16px;background:#e1e1e1;"></div>
<svg style="left:280px;top:353px;" width="9" height="9" viewBox="0 0 9 9"><rect x="0.5" y="0.5" width="8" height="8" fill="#fff" stroke="#848484"/><path d="M2 4.5 H7" stroke="#3a3a3a" stroke-width="1"/><path d="M4.5 2 V7" stroke="#3a3a3a" stroke-width="1"/></svg>
<div style="left:290px;top:357px;width:5px;height:1px;background:repeating-linear-gradient(to right,#a8a8a8 0 1px,transparent 1px 2px);"></div>
<span class="t " style="left:298.40px;top:352px;font-size:11px;line-height:12px;transform:scaleX(1.0387);">Section Classification</span>
<div style="left:275px;top:365px;width:729px;height:16px;background:#e7e7e7;"></div>
<svg style="left:280px;top:369px;" width="9" height="9" viewBox="0 0 9 9"><rect x="0.5" y="0.5" width="8" height="8" fill="#fff" stroke="#848484"/><path d="M2 4.5 H7" stroke="#3a3a3a" stroke-width="1"/></svg>
<div style="left:290px;top:373px;width:5px;height:1px;background:repeating-linear-gradient(to right,#a8a8a8 0 1px,transparent 1px 2px);"></div>
<span class="t " style="left:298.40px;top:368px;font-size:11px;line-height:12px;transform:scaleX(1.0081);">Design Check Values</span>
<div style="left:294px;top:381px;width:710px;height:16px;background:#fafaf5;"></div>
<div style="left:601px;top:381px;width:1px;height:16px;background:#e3e3de;"></div>
<div style="left:694px;top:381px;width:1px;height:16px;background:#e3e3de;"></div>
<div style="left:763px;top:381px;width:1px;height:16px;background:#e3e3de;"></div>
<div style="left:825px;top:381px;width:1px;height:16px;background:#e3e3de;"></div>
<div style="left:869px;top:381px;width:1px;height:16px;background:#e3e3de;"></div>
<div style="left:306px;top:389px;width:10px;height:1px;background:repeating-linear-gradient(to right,#9c9c9c 0 1px,transparent 1px 2px);"></div>
<span class="t " style="left:318.40px;top:384px;font-size:11px;line-height:12px;transform:scaleX(1.0600);">Design tension force</span>
<span class="t " style="left:606.20px;top:384px;font-size:11px;line-height:12px;">N</span>
<span class="t " style="left:614.34px;top:388px;font-size:9px;line-height:10px;transform:scaleX(0.9800);">t,Ed</span>
<span class="t " style="left:733.36px;top:384px;font-size:11px;line-height:12px;transform:scaleX(0.9750);">53.53</span>
<span class="t " style="left:768.40px;top:384px;font-size:11px;line-height:12px;">kN</span>
<div style="left:294px;top:397px;width:710px;height:16px;background:#fafaf5;"></div>
<div style="left:601px;top:397px;width:1px;height:16px;background:#e3e3de;"></div>
<div style="left:694px;top:397px;width:1px;height:16px;background:#e3e3de;"></div>
<div style="left:763px;top:397px;width:1px;height:16px;background:#e3e3de;"></div>
<div style="left:825px;top:397px;width:1px;height:16px;background:#e3e3de;"></div>
<div style="left:869px;top:397px;width:1px;height:16px;background:#e3e3de;"></div>
<div style="left:306px;top:405px;width:10px;height:1px;background:repeating-linear-gradient(to right,#9c9c9c 0 1px,transparent 1px 2px);"></div>
<span class="t " style="left:318.40px;top:400px;font-size:11px;line-height:12px;transform:scaleX(1.0132);">Sectional area</span>
<span class="t " style="left:606.20px;top:400px;font-size:11px;line-height:12px;">A</span>
<span class="t " style="left:739.33px;top:400px;font-size:11px;line-height:12px;transform:scaleX(0.9750);">9.60</span>
<span class="t " style="left:768.40px;top:400px;font-size:11px;line-height:12px;">cm</span>
<span class="t " style="left:783.36px;top:399px;font-size:8.5px;line-height:10px;">2</span>
<div style="left:294px;top:413px;width:710px;height:16px;background:#fafaf5;"></div>
<div style="left:601px;top:413px;width:1px;height:16px;background:#e3e3de;"></div>
<div style="left:694px;top:413px;width:1px;height:16px;background:#e3e3de;"></div>
<div style="left:763px;top:413px;width:1px;height:16px;background:#e3e3de;"></div>
<div style="left:825px;top:413px;width:1px;height:16px;background:#e3e3de;"></div>
<div style="left:869px;top:413px;width:1px;height:16px;background:#e3e3de;"></div>
<div style="left:306px;top:421px;width:10px;height:1px;background:repeating-linear-gradient(to right,#9c9c9c 0 1px,transparent 1px 2px);"></div>
<span class="t " style="left:318.40px;top:416px;font-size:11px;line-height:12px;transform:scaleX(1.0471);">Yield strength</span>
<span class="t " style="left:606.20px;top:416px;font-size:11px;line-height:12px;">f</span>
<span class="t " style="left:609.46px;top:420px;font-size:9px;line-height:10px;transform:scaleX(0.9800);">y</span>
<span class="t " style="left:721.43px;top:416px;font-size:11px;line-height:12px;transform:scaleX(0.9750);">235.000</span>
<span class="t " style="left:768.40px;top:416px;font-size:11px;line-height:12px;">N/mm</span>
<span class="t " style="left:798.03px;top:415px;font-size:8.5px;line-height:10px;">2</span>
<span class="t " style="left:874.20px;top:416px;font-size:11px;line-height:12px;transform:scaleX(0.9298);">3.2.1(1)</span>
<div style="left:294px;top:429px;width:710px;height:16px;background:#fafaf5;"></div>
<div style="left:601px;top:429px;width:1px;height:16px;background:#e3e3de;"></div>
<div style="left:694px;top:429px;width:1px;height:16px;background:#e3e3de;"></div>
<div style="left:763px;top:429px;width:1px;height:16px;background:#e3e3de;"></div>
<div style="left:825px;top:429px;width:1px;height:16px;background:#e3e3de;"></div>
<div style="left:869px;top:429px;width:1px;height:16px;background:#e3e3de;"></div>
<div style="left:306px;top:437px;width:10px;height:1px;background:repeating-linear-gradient(to right,#9c9c9c 0 1px,transparent 1px 2px);"></div>
<span class="t " style="left:318.40px;top:432px;font-size:11px;line-height:12px;transform:scaleX(1.0462);">Partial factor</span>
<span class="t " style="left:606.20px;top:432px;font-size:11px;line-height:12px;">γ</span>
<span class="t " style="left:611.90px;top:436px;font-size:9px;line-height:10px;transform:scaleX(0.9800);">M0</span>
<span class="t " style="left:739.33px;top:432px;font-size:11px;line-height:12px;transform:scaleX(0.9750);">1.00</span>
<span class="t " style="left:768.40px;top:432px;font-size:11px;line-height:12px;">--</span>
<span class="t " style="left:874.20px;top:432px;font-size:11px;line-height:12px;transform:scaleX(0.9118);">6.1(1)</span>
<div style="left:294px;top:445px;width:710px;height:16px;background:#fafaf5;"></div>
<div style="left:601px;top:445px;width:1px;height:16px;background:#e3e3de;"></div>
<div style="left:694px;top:445px;width:1px;height:16px;background:#e3e3de;"></div>
<div style="left:763px;top:445px;width:1px;height:16px;background:#e3e3de;"></div>
<div style="left:825px;top:445px;width:1px;height:16px;background:#e3e3de;"></div>
<div style="left:869px;top:445px;width:1px;height:16px;background:#e3e3de;"></div>
<div style="left:306px;top:453px;width:10px;height:1px;background:repeating-linear-gradient(to right,#9c9c9c 0 1px,transparent 1px 2px);"></div>
<span class="t " style="left:318.40px;top:448px;font-size:11px;line-height:12px;transform:scaleX(1.0268);">Design plastic axial resistance</span>
<span class="t " style="left:606.20px;top:448px;font-size:11px;line-height:12px;">N</span>
<span class="t " style="left:614.34px;top:452px;font-size:9px;line-height:10px;transform:scaleX(0.9800);">pl,Rd</span>
<span class="t " style="left:721.43px;top:448px;font-size:11px;line-height:12px;transform:scaleX(0.9750);">225.600</span>
<span class="t " style="left:768.40px;top:448px;font-size:11px;line-height:12px;">kN</span>
<span class="t " style="left:874.20px;top:448px;font-size:11px;line-height:12px;transform:scaleX(0.9742);">6.2.3, Eq. 6.6</span>
<div style="left:294px;top:461px;width:710px;height:16px;background:#fafaf5;"></div>
<div style="left:307px;top:461px;width:519px;height:16px;background:#fafa0a;"></div>
<div style="left:601px;top:461px;width:1px;height:16px;background:#e2e208;"></div>
<div style="left:694px;top:461px;width:1px;height:16px;background:#e2e208;"></div>
<div style="left:763px;top:461px;width:1px;height:16px;background:#e2e208;"></div>
<div style="left:825px;top:461px;width:1px;height:16px;background:#e2e208;"></div>
<div style="left:869px;top:461px;width:1px;height:16px;background:#e3e3de;"></div>
<div style="left:306px;top:469px;width:10px;height:1px;background:repeating-linear-gradient(to right,#a0a00a 0 1px,transparent 1px 2px);"></div>
<span class="t " style="left:318.40px;top:464px;font-size:11px;line-height:12px;transform:scaleX(1.0463);">Net area of section</span>
<span class="t " style="left:606.20px;top:464px;font-size:11px;line-height:12px;">A</span>
<span class="t " style="left:613.74px;top:468px;font-size:9px;line-height:10px;transform:scaleX(0.9800);">net</span>
<span class="t " style="left:739.33px;top:464px;font-size:11px;line-height:12px;transform:scaleX(0.9750);">5.80</span>
<span class="t " style="left:768.40px;top:464px;font-size:11px;line-height:12px;">cm</span>
<span class="t " style="left:783.36px;top:463px;font-size:8.5px;line-height:10px;">2</span>
<div style="left:294px;top:477px;width:710px;height:16px;background:#fafaf5;"></div>
<div style="left:601px;top:477px;width:1px;height:16px;background:#e3e3de;"></div>
<div style="left:694px;top:477px;width:1px;height:16px;background:#e3e3de;"></div>
<div style="left:763px;top:477px;width:1px;height:16px;background:#e3e3de;"></div>
<div style="left:825px;top:477px;width:1px;height:16px;background:#e3e3de;"></div>
<div style="left:869px;top:477px;width:1px;height:16px;background:#e3e3de;"></div>
<div style="left:306px;top:485px;width:10px;height:1px;background:repeating-linear-gradient(to right,#9c9c9c 0 1px,transparent 1px 2px);"></div>
<span class="t " style="left:318.40px;top:480px;font-size:11px;line-height:12px;transform:scaleX(1.0764);">Ultimate strength</span>
<span class="t " style="left:606.20px;top:480px;font-size:11px;line-height:12px;">f</span>
<span class="t " style="left:609.46px;top:484px;font-size:9px;line-height:10px;transform:scaleX(0.9800);">u</span>
<span class="t " style="left:721.43px;top:480px;font-size:11px;line-height:12px;transform:scaleX(0.9750);">360.000</span>
<span class="t " style="left:768.40px;top:480px;font-size:11px;line-height:12px;">N/mm</span>
<span class="t " style="left:798.03px;top:479px;font-size:8.5px;line-height:10px;">2</span>
<span class="t " style="left:874.20px;top:480px;font-size:11px;line-height:12px;transform:scaleX(0.9298);">3.2.1(1)</span>
<div style="left:294px;top:493px;width:710px;height:16px;background:#fafaf5;"></div>
<div style="left:601px;top:493px;width:1px;height:16px;background:#e3e3de;"></div>
<div style="left:694px;top:493px;width:1px;height:16px;background:#e3e3de;"></div>
<div style="left:763px;top:493px;width:1px;height:16px;background:#e3e3de;"></div>
<div style="left:825px;top:493px;width:1px;height:16px;background:#e3e3de;"></div>
<div style="left:869px;top:493px;width:1px;height:16px;background:#e3e3de;"></div>
<div style="left:306px;top:501px;width:10px;height:1px;background:repeating-linear-gradient(to right,#9c9c9c 0 1px,transparent 1px 2px);"></div>
<span class="t " style="left:318.40px;top:496px;font-size:11px;line-height:12px;transform:scaleX(1.0462);">Partial factor</span>
<span class="t " style="left:606.20px;top:496px;font-size:11px;line-height:12px;">γ</span>
<span class="t " style="left:611.90px;top:500px;font-size:9px;line-height:10px;transform:scaleX(0.9800);">M2</span>
<span class="t " style="left:739.33px;top:496px;font-size:11px;line-height:12px;transform:scaleX(0.9750);">1.25</span>
<span class="t " style="left:768.40px;top:496px;font-size:11px;line-height:12px;">--</span>
<span class="t " style="left:874.20px;top:496px;font-size:11px;line-height:12px;transform:scaleX(0.9118);">6.1(1)</span>
<div style="left:294px;top:509px;width:710px;height:16px;background:#fafaf5;"></div>
<div style="left:601px;top:509px;width:1px;height:16px;background:#e3e3de;"></div>
<div style="left:694px;top:509px;width:1px;height:16px;background:#e3e3de;"></div>
<div style="left:763px;top:509px;width:1px;height:16px;background:#e3e3de;"></div>
<div style="left:825px;top:509px;width:1px;height:16px;background:#e3e3de;"></div>
<div style="left:869px;top:509px;width:1px;height:16px;background:#e3e3de;"></div>
<div style="left:306px;top:517px;width:10px;height:1px;background:repeating-linear-gradient(to right,#9c9c9c 0 1px,transparent 1px 2px);"></div>
<span class="t " style="left:318.40px;top:512px;font-size:11px;line-height:12px;transform:scaleX(1.0586);">Design ultimate axial resistance of net section with h...</span>
<span class="t " style="left:606.20px;top:512px;font-size:11px;line-height:12px;">N</span>
<span class="t " style="left:614.34px;top:516px;font-size:9px;line-height:10px;transform:scaleX(0.9800);">u,Rd</span>
<span class="t " style="left:721.43px;top:512px;font-size:11px;line-height:12px;transform:scaleX(0.9750);">150.336</span>
<span class="t " style="left:768.40px;top:512px;font-size:11px;line-height:12px;">kN</span>
<span class="t " style="left:874.20px;top:512px;font-size:11px;line-height:12px;transform:scaleX(0.9742);">6.2.3, Eq. 6.7</span>
<div style="left:294px;top:525px;width:710px;height:16px;background:#fafaf5;"></div>
<div style="left:601px;top:525px;width:1px;height:16px;background:#e3e3de;"></div>
<div style="left:694px;top:525px;width:1px;height:16px;background:#e3e3de;"></div>
<div style="left:763px;top:525px;width:1px;height:16px;background:#e3e3de;"></div>
<div style="left:825px;top:525px;width:1px;height:16px;background:#e3e3de;"></div>
<div style="left:869px;top:525px;width:1px;height:16px;background:#e3e3de;"></div>
<div style="left:306px;top:533px;width:10px;height:1px;background:repeating-linear-gradient(to right,#9c9c9c 0 1px,transparent 1px 2px);"></div>
<span class="t " style="left:318.40px;top:528px;font-size:11px;line-height:12px;transform:scaleX(1.0276);">Design axial force resistance</span>
<span class="t " style="left:606.20px;top:528px;font-size:11px;line-height:12px;">N</span>
<span class="t " style="left:614.34px;top:532px;font-size:9px;line-height:10px;transform:scaleX(0.9800);">t,Rd</span>
<span class="t " style="left:727.40px;top:528px;font-size:11px;line-height:12px;transform:scaleX(0.9750);">150.34</span>
<span class="t " style="left:768.40px;top:528px;font-size:11px;line-height:12px;">kN</span>
<span class="t " style="left:874.20px;top:528px;font-size:11px;line-height:12px;transform:scaleX(0.9298);">6.2.3(2)</span>
<div style="left:294px;top:557px;width:710px;height:16px;background:#fafaf5;"></div>
<div style="left:601px;top:557px;width:1px;height:16px;background:#e3e3de;"></div>
<div style="left:694px;top:557px;width:1px;height:16px;background:#e3e3de;"></div>
<div style="left:763px;top:557px;width:1px;height:16px;background:#e3e3de;"></div>
<div style="left:825px;top:557px;width:1px;height:16px;background:#e3e3de;"></div>
<div style="left:869px;top:557px;width:1px;height:16px;background:#e3e3de;"></div>
<div style="left:306px;top:565px;width:10px;height:1px;background:repeating-linear-gradient(to right,#9c9c9c 0 1px,transparent 1px 2px);"></div>
<span class="t " style="left:318.40px;top:560px;font-size:11px;line-height:12px;transform:scaleX(1.0388);">Design check ratio</span>
<span class="t " style="left:606.20px;top:560px;font-size:11px;line-height:12px;">η</span>
<span class="t " style="left:734.60px;top:560px;font-size:11px;line-height:12px;font-weight:700;transform:scaleX(0.9300);">0.356</span>
<span class="t " style="left:768.40px;top:560px;font-size:11px;line-height:12px;">--</span>
<span class="t " style="left:874.20px;top:560px;font-size:11px;line-height:12px;transform:scaleX(0.9742);">EN 1993-1-1, 6.2.3, Eq. ...</span>
<span class="t " style="left:831.30px;top:560px;font-size:11px;line-height:12px;">≤</span>
<span class="t " style="left:841.40px;top:560px;font-size:11px;line-height:12px;font-weight:700;">1</span>
<svg style="left:857px;top:562px;" width="9" height="7" viewBox="0 0 9 7"><path d="M0.8 3.4 L3.2 5.8 L8 0.8" stroke="#22b422" stroke-width="1.7" fill="none"/></svg>
<div style="left:284px;top:122px;width:1px;height:7px;background:repeating-linear-gradient(to bottom,#9c9c9c 0 1px,transparent 1px 2px);"></div>
<div style="left:284px;top:138px;width:1px;height:7px;background:repeating-linear-gradient(to bottom,#9c9c9c 0 1px,transparent 1px 2px);"></div>
<div style="left:284px;top:234px;width:1px;height:119px;background:repeating-linear-gradient(to bottom,#9c9c9c 0 1px,transparent 1px 2px);"></div>
<div style="left:284px;top:362px;width:1px;height:7px;background:repeating-linear-gradient(to bottom,#9c9c9c 0 1px,transparent 1px 2px);"></div>
<div style="left:284px;top:205px;width:1px;height:20px;background:repeating-linear-gradient(to bottom,#9c9c9c 0 1px,transparent 1px 2px);"></div>
<div style="left:304px;top:157px;width:1px;height:41px;background:repeating-linear-gradient(to bottom,#a0a00a 0 1px,transparent 1px 2px);"></div>
<div style="left:284px;top:154px;width:1px;height:51px;background:repeating-linear-gradient(to bottom,#a0a00a 0 1px,transparent 1px 2px);"></div>
<div style="left:304px;top:237px;width:1px;height:89px;background:repeating-linear-gradient(to bottom,#9c9c9c 0 1px,transparent 1px 2px);"></div>
<div style="left:304px;top:381px;width:1px;height:185px;background:repeating-linear-gradient(to bottom,#9c9c9c 0 1px,transparent 1px 2px);"></div>
<div style="left:276px;top:141px;width:727px;height:16px;box-sizing:border-box;border:1px dotted #000;"></div>
<div style="left:1015px;top:86px;width:487px;height:775px;background:#fff;"></div>
<span class="t m" style="left:1023.25px;top:96px;font-size:11.5px;line-height:12px;font-weight:700;transform:scaleX(0.9593);">Design Check SP1100 | EN 1993 | DIN | 2016-04</span>
<span class="t m" style="left:1023.25px;top:126px;font-size:11.5px;line-height:12px;transform:scaleX(0.9415);">Section Proof</span>
<span class="t m" style="left:1023.25px;top:141px;font-size:11.5px;line-height:12px;transform:scaleX(0.9101);">Tension acc. to 6.2.3</span>
<span class="t m" style="left:1024.90px;top:189px;font-size:11px;line-height:12px;color:#111;transform:scaleX(0.9800);">N</span>
<span class="t m" style="left:1033.29px;top:194px;font-size:8px;line-height:9px;color:#111;transform:scaleX(0.9030);">pl,Rd</span>
<div style="left:1067px;top:194px;width:8px;height:1px;background:#6e6e6e;"></div>
<div style="left:1067px;top:197px;width:8px;height:1px;background:#6e6e6e;"></div>
<span class="t m" style="left:1090.50px;top:189px;font-size:11px;line-height:12px;color:#111;transform:scaleX(0.9813);">A</span>
<div style="left:1105px;top:196px;width:1px;height:1px;background:#444;"></div>
<div style="left:1113.75px;top:196px;width:20.0px;height:1px;background:#6a6a6a;"></div>
<span class="t m" style="left:1120.00px;top:179px;font-size:11px;line-height:12px;color:#111;transform:scaleX(1.0471);">f</span>
<span class="t m" style="left:1123.80px;top:184px;font-size:8px;line-height:9px;color:#111;transform:scaleX(0.9000);">y</span>
<span class="t m" style="left:1114.70px;top:199px;font-size:10.5px;line-height:11px;color:#111;font-family:'Liberation Serif',serif;">γ</span>
<span class="t m" style="left:1120.84px;top:203px;font-size:7.5px;line-height:9px;color:#111;transform:scaleX(1.0712);">M0</span>
<div style="left:1067px;top:232px;width:8px;height:1px;background:#6e6e6e;"></div>
<div style="left:1067px;top:235px;width:8px;height:1px;background:#6e6e6e;"></div>
<span class="t m" style="left:1090.50px;top:227px;font-size:11px;line-height:12px;color:#111;transform:scaleX(0.9239);">9.60 cm</span>
<span class="t m" style="left:1127.05px;top:226px;font-size:7.5px;line-height:9px;color:#111;transform:scaleX(1.0069);">2</span>
<div style="left:1139px;top:234px;width:1px;height:1px;background:#444;"></div>
<div style="left:1148.25px;top:234px;width:78.25px;height:1px;background:#6a6a6a;"></div>
<span class="t m" style="left:1149.50px;top:219px;font-size:11px;line-height:12px;color:#111;transform:scaleX(0.9827);">235.000 N/mm</span>
<span class="t m" style="left:1220.80px;top:218px;font-size:7.5px;line-height:9px;color:#111;transform:scaleX(1.0069);">2</span>
<span class="t m" style="left:1177.50px;top:235px;font-size:11px;line-height:12px;color:#111;transform:scaleX(0.9342);">1.00</span>
<div style="left:1067px;top:257px;width:8px;height:1px;background:#6e6e6e;"></div>
<div style="left:1067px;top:260px;width:8px;height:1px;background:#6e6e6e;"></div>
<span class="t m" style="left:1090.50px;top:252px;font-size:11px;line-height:12px;color:#111;transform:scaleX(0.9376);">225.600 kN</span>
<div style="left:1111px;top:278px;width:49px;height:60px;background:#ffff00;"></div>
<span class="t m" style="left:1024.90px;top:285px;font-size:11px;line-height:12px;color:#111;transform:scaleX(0.9800);">N</span>
<span class="t m" style="left:1033.29px;top:290px;font-size:8px;line-height:9px;color:#111;transform:scaleX(0.8797);">u,Rd</span>
<div style="left:1065px;top:289px;width:8px;height:1px;background:#6e6e6e;"></div>
<div style="left:1065px;top:292px;width:8px;height:1px;background:#6e6e6e;"></div>
<span class="t m" style="left:1088.25px;top:285px;font-size:11px;line-height:12px;color:#111;transform:scaleX(0.9646);">0.9</span>
<div style="left:1110px;top:291px;width:1px;height:1px;background:#444;"></div>
<span class="t m" style="left:1118.00px;top:285px;font-size:11px;line-height:12px;color:#111;transform:scaleX(0.9813);">A</span>
<span class="t m" style="left:1125.80px;top:290px;font-size:8px;line-height:9px;color:#111;transform:scaleX(0.8947);">net</span>
<div style="left:1145px;top:291px;width:1px;height:1px;background:#444;"></div>
<div style="left:1153px;top:291px;width:20px;height:1px;background:#6a6a6a;"></div>
<span class="t m" style="left:1159.25px;top:276px;font-size:11px;line-height:12px;color:#111;transform:scaleX(1.0471);">f</span>
<span class="t m" style="left:1163.05px;top:281px;font-size:8px;line-height:9px;color:#111;transform:scaleX(0.8316);">u</span>
<span class="t m" style="left:1153.95px;top:295px;font-size:10.5px;line-height:11px;color:#111;font-family:'Liberation Serif',serif;">γ</span>
<span class="t m" style="left:1160.09px;top:300px;font-size:7.5px;line-height:9px;color:#111;transform:scaleX(1.0712);">M2</span>
<div style="left:1065px;top:328px;width:8px;height:1px;background:#6e6e6e;"></div>
<div style="left:1065px;top:331px;width:8px;height:1px;background:#6e6e6e;"></div>
<span class="t m" style="left:1088.25px;top:323px;font-size:11px;line-height:12px;color:#111;transform:scaleX(0.9646);">0.9</span>
<div style="left:1110px;top:329px;width:1px;height:1px;background:#444;"></div>
<span class="t m" style="left:1118.00px;top:323px;font-size:11px;line-height:12px;color:#111;transform:scaleX(0.9239);">5.80 cm</span>
<span class="t m" style="left:1154.55px;top:322px;font-size:7.5px;line-height:9px;color:#111;transform:scaleX(1.0069);">2</span>
<div style="left:1166px;top:329px;width:1px;height:1px;background:#444;"></div>
<div style="left:1175.5px;top:329px;width:78.25px;height:1px;background:#6a6a6a;"></div>
<span class="t m" style="left:1176.75px;top:314px;font-size:11px;line-height:12px;color:#111;transform:scaleX(0.9793);">360.000 N/mm</span>
<span class="t m" style="left:1247.80px;top:313px;font-size:7.5px;line-height:9px;color:#111;transform:scaleX(1.0069);">2</span>
<span class="t m" style="left:1204.50px;top:331px;font-size:11px;line-height:12px;color:#111;transform:scaleX(0.9342);">1.25</span>
<div style="left:1065px;top:353px;width:8px;height:1px;background:#6e6e6e;"></div>
<div style="left:1065px;top:356px;width:8px;height:1px;background:#6e6e6e;"></div>
<span class="t m" style="left:1088.25px;top:348px;font-size:11px;line-height:12px;color:#111;transform:scaleX(0.9420);">150.336 kN</span>
<span class="t m" style="left:1024.90px;top:374px;font-size:11px;line-height:12px;color:#111;transform:scaleX(0.9800);">N</span>
<span class="t m" style="left:1033.29px;top:379px;font-size:8px;line-height:9px;color:#111;transform:scaleX(0.9280);">t,Rd</span>
<div style="left:1063.75px;top:378px;width:8px;height:1px;background:#6e6e6e;"></div>
<div style="left:1063.75px;top:381px;width:8px;height:1px;background:#6e6e6e;"></div>
<span class="t m" style="left:1087.50px;top:374px;font-size:11px;line-height:12px;color:#111;transform:scaleX(0.9450);">min</span>
<span class="t m" style="left:1107.30px;top:374px;font-size:11px;line-height:12px;color:#111;transform:scaleX(0.9009);">(</span>
<span class="t m" style="left:1110.75px;top:374px;font-size:11px;line-height:12px;color:#111;transform:scaleX(0.9800);">N</span>
<span class="t m" style="left:1119.14px;top:379px;font-size:8px;line-height:9px;color:#111;transform:scaleX(0.9566);">pl,Rd</span>
<span class="t m" style="left:1138.60px;top:374px;font-size:11px;line-height:12px;color:#111;transform:scaleX(0.6544);">,</span>
<span class="t m" style="left:1147.50px;top:374px;font-size:11px;line-height:12px;color:#111;transform:scaleX(0.9800);">N</span>
<span class="t m" style="left:1155.89px;top:379px;font-size:8px;line-height:9px;color:#111;transform:scaleX(0.8353);">u,Rd</span>
<span class="t m" style="left:1172.80px;top:374px;font-size:11px;line-height:12px;color:#111;transform:scaleX(0.9009);">)</span>
<div style="left:1063.75px;top:398px;width:8px;height:1px;background:#6e6e6e;"></div>
<div style="left:1063.75px;top:401px;width:8px;height:1px;background:#6e6e6e;"></div>
<span class="t m" style="left:1087.50px;top:394px;font-size:11px;line-height:12px;color:#111;transform:scaleX(0.9450);">min</span>
<span class="t m" style="left:1107.30px;top:394px;font-size:11px;line-height:12px;color:#111;transform:scaleX(0.9009);">(</span>
<span class="t m" style="left:1111.25px;top:394px;font-size:11px;line-height:12px;color:#111;transform:scaleX(0.9356);">225.600 kN,</span>
<span class="t m" style="left:1173.75px;top:394px;font-size:11px;line-height:12px;color:#111;transform:scaleX(0.9465);">150.336 kN</span>
<span class="t m" style="left:1227.40px;top:394px;font-size:11px;line-height:12px;color:#111;transform:scaleX(0.9009);">)</span>
<div style="left:1063.75px;top:418px;width:8px;height:1px;background:#6e6e6e;"></div>
<div style="left:1063.75px;top:421px;width:8px;height:1px;background:#6e6e6e;"></div>
<span class="t m" style="left:1087.50px;top:413px;font-size:11px;line-height:12px;color:#111;transform:scaleX(0.9323);">150.34 kN</span>
<span class="t m" style="left:1025.00px;top:448px;font-size:10.5px;line-height:11px;color:#111;font-family:'Liberation Serif',serif;">η</span>
<div style="left:1047px;top:452px;width:8px;height:1px;background:#6e6e6e;"></div>
<div style="left:1047px;top:455px;width:8px;height:1px;background:#6e6e6e;"></div>
<div style="left:1071.75px;top:453px;width:25.0px;height:1px;background:#6a6a6a;"></div>
<span class="t m" style="left:1073.00px;top:438px;font-size:11px;line-height:12px;color:#111;transform:scaleX(0.9800);">N</span>
<span class="t m" style="left:1081.39px;top:443px;font-size:8px;line-height:9px;color:#111;transform:scaleX(0.9567);">t,Ed</span>
<span class="t m" style="left:1073.00px;top:456px;font-size:11px;line-height:12px;color:#111;transform:scaleX(0.9800);">N</span>
<span class="t m" style="left:1081.39px;top:461px;font-size:8px;line-height:9px;color:#111;transform:scaleX(0.9280);">t,Rd</span>
<div style="left:1047px;top:487px;width:8px;height:1px;background:#6e6e6e;"></div>
<div style="left:1047px;top:490px;width:8px;height:1px;background:#6e6e6e;"></div>
<div style="left:1071.75px;top:488px;width:49.0px;height:1px;background:#6a6a6a;"></div>
<span class="t m" style="left:1075.50px;top:474px;font-size:11px;line-height:12px;color:#111;transform:scaleX(0.9369);">53.53 kN</span>
<span class="t m" style="left:1072.50px;top:490px;font-size:11px;line-height:12px;color:#111;transform:scaleX(0.9373);">150.34 kN</span>
<div style="left:1047px;top:511px;width:8px;height:1px;background:#6e6e6e;"></div>
<div style="left:1047px;top:514px;width:8px;height:1px;background:#6e6e6e;"></div>
<span class="t m" style="left:1070.50px;top:507px;font-size:11px;line-height:12px;color:#111;transform:scaleX(0.9354);">0.356</span>
<div style="left:1022px;top:530px;width:119px;height:20px;border:1px solid #c6c6c6;box-sizing:border-box;"></div>
<span class="t m" style="left:1026.25px;top:534px;font-size:10.5px;line-height:11px;color:#111;font-family:'Liberation Serif',serif;">η</span>
<div style="left:1048.75px;top:539px;width:8.3px;height:1px;background:#6e6e6e;"></div>
<div style="left:1048.75px;top:542px;width:8.3px;height:1px;background:#6e6e6e;"></div>
<span class="t m" style="left:1072.50px;top:534px;font-size:11px;line-height:12px;color:#111;transform:scaleX(0.9264);">0.356</span>
<span class="t m" style="left:1105.75px;top:533px;font-size:12px;line-height:14px;color:#444;transform:scaleX(1.1084);">≤</span>
<span class="t m" style="left:1117.30px;top:534px;font-size:11.5px;line-height:12px;font-weight:700;color:#111;font-family:'Liberation Serif',serif;">1</span>
<svg style="left:1126.6px;top:535.4px;" width="9" height="7" viewBox="0 0 9 7"><path d="M0.8 3.4 L3.2 5.8 L8 0.8" stroke="#22b422" stroke-width="1.7" fill="none"/></svg>
<div style="left:1433px;top:175px;width:1px;height:385px;background:#c8c8c8;"></div>
<span class="t m" style="left:1440.75px;top:182px;font-size:9px;line-height:10px;color:#1a1a1a;transform:scaleX(1.0133);">6.2.3, Eq. 6.6</span>
<span class="t m" style="left:1440.75px;top:279px;font-size:9px;line-height:10px;color:#1a1a1a;transform:scaleX(1.0133);">6.2.3, Eq. 6.7</span>
<span class="t m" style="left:1440.75px;top:375px;font-size:9px;line-height:10px;color:#1a1a1a;transform:scaleX(1.0236);">6.2.3(2)</span>
<span class="t m" style="left:1440.75px;top:440px;font-size:9px;line-height:10px;color:#1a1a1a;transform:scaleX(1.0133);">6.2.3, Eq. 6.5</span>
<span class="t m" style="left:1024.90px;top:580px;font-size:11px;line-height:12px;color:#222;transform:scaleX(0.9700);">N</span>
<span class="t m" style="left:1033.21px;top:585px;font-size:8.5px;line-height:10px;color:#222;">pl,Rd</span>
<span class="t m" style="left:1062.80px;top:580px;font-size:11px;line-height:12px;color:#222;transform:scaleX(0.9671);">Design plastic axial resistance</span>
<span class="t m" style="left:1024.90px;top:599px;font-size:11px;line-height:12px;color:#222;transform:scaleX(0.9700);">A</span>
<span class="t m" style="left:1062.80px;top:599px;font-size:11px;line-height:12px;color:#222;transform:scaleX(0.9563);">Sectional area</span>
<span class="t m" style="left:1024.90px;top:618px;font-size:11px;line-height:12px;color:#222;transform:scaleX(0.9700);">f</span>
<span class="t m" style="left:1028.46px;top:623px;font-size:8.5px;line-height:10px;color:#222;">y</span>
<span class="t m" style="left:1062.80px;top:618px;font-size:11px;line-height:12px;color:#222;">Yield strength</span>
<span class="t m" style="left:1024.60px;top:638px;font-size:11px;line-height:12px;color:#222;">γ</span>
<span class="t m" style="left:1031.00px;top:642px;font-size:8.5px;line-height:10px;color:#222;">M0</span>
<span class="t m" style="left:1062.80px;top:638px;font-size:11px;line-height:12px;color:#222;transform:scaleX(0.9839);">Partial factor</span>
<span class="t m" style="left:1024.90px;top:658px;font-size:11px;line-height:12px;color:#222;transform:scaleX(0.9700);">N</span>
<span class="t m" style="left:1033.21px;top:662px;font-size:8.5px;line-height:10px;color:#222;">u,Rd</span>
<span class="t m" style="left:1062.80px;top:658px;font-size:11px;line-height:12px;color:#222;transform:scaleX(0.9916);">Design ultimate axial resistance of net section with holes for fasteners</span>
<span class="t m" style="left:1024.90px;top:678px;font-size:11px;line-height:12px;color:#222;transform:scaleX(0.9700);">A</span>
<span class="t m" style="left:1032.62px;top:682px;font-size:8.5px;line-height:10px;color:#222;">net</span>
<span class="t m" style="left:1062.80px;top:678px;font-size:11px;line-height:12px;color:#222;transform:scaleX(0.9883);">Net area of section</span>
<span class="t m" style="left:1024.90px;top:698px;font-size:11px;line-height:12px;color:#222;transform:scaleX(0.9700);">f</span>
<span class="t m" style="left:1028.46px;top:702px;font-size:8.5px;line-height:10px;color:#222;">u</span>
<span class="t m" style="left:1062.80px;top:698px;font-size:11px;line-height:12px;color:#222;transform:scaleX(1.0115);">Ultimate strength</span>
<span class="t m" style="left:1024.60px;top:718px;font-size:11px;line-height:12px;color:#222;">γ</span>
<span class="t m" style="left:1031.00px;top:722px;font-size:8.5px;line-height:10px;color:#222;">M2</span>
<span class="t m" style="left:1062.80px;top:718px;font-size:11px;line-height:12px;color:#222;transform:scaleX(0.9839);">Partial factor</span>
<span class="t m" style="left:1024.90px;top:738px;font-size:11px;line-height:12px;color:#222;transform:scaleX(0.9700);">N</span>
<span class="t m" style="left:1033.21px;top:742px;font-size:8.5px;line-height:10px;color:#222;">t,Rd</span>
<span class="t m" style="left:1062.80px;top:738px;font-size:11px;line-height:12px;color:#222;transform:scaleX(0.9657);">Design axial force resistance</span>
<span class="t m" style="left:1024.90px;top:758px;font-size:11px;line-height:12px;color:#222;transform:scaleX(0.9700);">N</span>
<span class="t m" style="left:1033.21px;top:762px;font-size:8.5px;line-height:10px;color:#222;">t,Ed</span>
<span class="t m" style="left:1062.80px;top:758px;font-size:11px;line-height:12px;color:#222;transform:scaleX(0.9892);">Design tension force</span>
<div style="left:1020px;top:836px;width:25px;height:21px;background:#cce4f7;"></div>
<div style="left:1048px;top:836px;width:25px;height:21px;background:#cce4f7;"></div>
<div style="left:1076px;top:836px;width:25px;height:21px;background:#d2e6f8;border:1px solid #0a5cab;box-sizing:border-box;"></div>
<div style="left:1104px;top:836px;width:37px;height:21px;background:#cce4f7;"></div>
<svg style="left:1024px;top:838px;" width="17" height="17" viewBox="0 0 17 17">
<defs><linearGradient id="fa" x1="0" y1="0" x2="1" y2="0"><stop offset="0" stop-color="#fff"/><stop offset="1" stop-color="#9db7dc"/></linearGradient>
<linearGradient id="fb" x1="0" y1="0" x2="1" y2="0"><stop offset="0" stop-color="#cfe3c4"/><stop offset="1" stop-color="#fff"/></linearGradient></defs>
<rect x="0" y="0" width="16.2" height="16" fill="#fff"/>
<rect x="8" y="0.4" width="7.6" height="7" fill="url(#fb)"/>
<path d="M9.6 0.4 V7.4 M11.4 0.4 V7.4 M13.2 0.4 V7.4 M8 2.6 H15.6 M8 5 H15.6" stroke="#fff" stroke-width="0.7"/>
<rect x="0.4" y="8.6" width="9" height="7" fill="url(#fa)"/>
<path d="M2 8.6 V15.6 M4 8.6 V15.6 M6 8.6 V15.6" stroke="#fff" stroke-width="0.7" opacity="0.8"/>
<rect x="0.2" y="0.2" width="7.8" height="7.6" fill="#555"/>
<rect x="0.6" y="0.4" width="7.2" height="3.6" fill="#7fd6f6"/>
<rect x="0.6" y="4" width="7.2" height="3.2" fill="#b5803a"/>
<rect x="3.4" y="1.6" width="3" height="5" fill="#3fae1c"/><rect x="4.4" y="3" width="3" height="2" fill="#3fae1c"/>
<circle cx="2.2" cy="2.2" r="1.1" fill="#fff200"/>
<path d="M8.4 8.4 L13 8 L16 10.4 L16.2 14 L13.4 16 L9 15.2 Z" fill="#4a7ec8"/>
<path d="M13 8.4 L16 10.6 L15.9 14 L14 15.6 L14.2 11.4 Z" fill="#1f3358"/>
<path d="M9.6 10.6 L10.2 13.6 L13 14" stroke="#8db6ee" stroke-width="1.3" fill="none"/>
</svg>
<svg style="left:1052px;top:838px;" width="17" height="17" viewBox="0 0 17 17">
<path d="M2.1 0.5 H5 M2.1 6.5 H5 M7.1 0.5 H15 M7.1 3.5 H14 M7.1 6.5 H15 M7.1 9.5 H14 M7.1 12.5 H15 M7.1 15.5 H14" stroke="#5c5c5c" stroke-width="1"/>
<path d="M3.5 8.4 V13" stroke="#5c5c5c" stroke-width="1.2"/><path d="M0.8 11.2 H6.2 L3.5 15.9 Z" fill="#5c5c5c"/>
</svg>
<svg style="left:1079px;top:838px;" width="19" height="17" viewBox="0 0 19 17">
<g font-family="Liberation Sans" font-weight="700" font-size="8.4" fill="#555">
<text x="1.1" y="5.8">x</text><text x="1.1" y="13.7">y</text><text x="12.5" y="5.8">7</text><text x="12.4" y="14.7">4</text></g>
<path d="M1.2 7.4 H5.9 M12 7.4 H17" stroke="#555" stroke-width="1"/>
<path d="M7 6.7 H10.9 M7 8.7 H10.9" stroke="#555" stroke-width="1"/>
</svg>
<svg style="left:1106px;top:838px;" width="17" height="17" viewBox="0 0 17 17">
<rect x="3.6" y="0.2" width="8.8" height="3.4" fill="#5c5c5c"/>
<path d="M1.6 5 H14.4 Q16 5 16 6.6 V11.8 H0 V6.6 Q0 5 1.6 5 Z" fill="#5c5c5c"/>
<rect x="13" y="6.8" width="1.6" height="1.2" fill="#fff"/>
<rect x="3.2" y="9.4" width="9.6" height="6.4" fill="#fff" stroke="#5c5c5c" stroke-width="1.2"/>
<path d="M5 11.6 H11 M5 13.6 H11" stroke="#5c5c5c" stroke-width="1"/>
</svg>
<svg style="left:1130px;top:844px;" width="7" height="4" viewBox="0 0 7 4"><path d="M0 0 H7 L3.5 4 Z" fill="#111"/></svg>
<div style="left:1px;top:869px;width:1510px;height:42px;background:#fff;"></div>
<div style="left:10px;top:879px;width:25px;height:21px;background:#cce4f7;"></div>
<div style="left:45px;top:879px;width:25px;height:21px;background:#cce4f7;"></div>
<svg style="left:14px;top:881px;" width="17" height="18" viewBox="0 0 17 18">
<circle cx="8.9" cy="7" r="6" fill="#666"/>
<path d="M3.4 9.4 L1 15 L7.6 12.6 Z" fill="#666"/>
<text x="5.9" y="11" font-family="Liberation Sans" font-weight="700" font-size="10.5" fill="#fff">?</text>
</svg>
<svg style="left:48px;top:880px;" width="19" height="18" viewBox="0 0 19 18">
<rect x="1.2" y="1.3" width="15.6" height="4.3" fill="#94e078" stroke="#7cc964" stroke-width="0.6"/>
<path d="M4 3.4 V5.4 M6.6 3.4 V5.4 M9.2 3.4 V5.4 M11.8 3.4 V5.4 M14.4 3.4 V5.4" stroke="#6fbf55" stroke-width="0.8"/>
<g transform="translate(0.7,14.1) scale(0.86,1)"><text x="0" y="0" font-family="Liberation Sans" font-weight="700" font-size="9.5" fill="#111">0,</text></g>
<g transform="translate(8,14.1) scale(0.86,1)"><text x="0" y="0" font-family="Liberation Sans" font-weight="400" font-size="9.5" fill="#1c2a7c" stroke="#1c2a7c" stroke-width="0.3">00</text></g>
<path d="M8 15.7 H17" stroke="#1c2a7c" stroke-width="1"/>
</svg>
<div style="left:1420px;top:880px;width:81px;height:21px;background:#e1e1e1;border:1px solid #adadad;box-sizing:border-box;"></div>
<span class="t " style="left:1446.40px;top:885px;font-size:11px;line-height:12px;transform:scaleX(0.9672);">Close</span>
<div style="left:0px;top:0px;width:1512px;height:912px;border:1px solid #666;box-sizing:border-box;pointer-events:none;"></div>
</body></html>
